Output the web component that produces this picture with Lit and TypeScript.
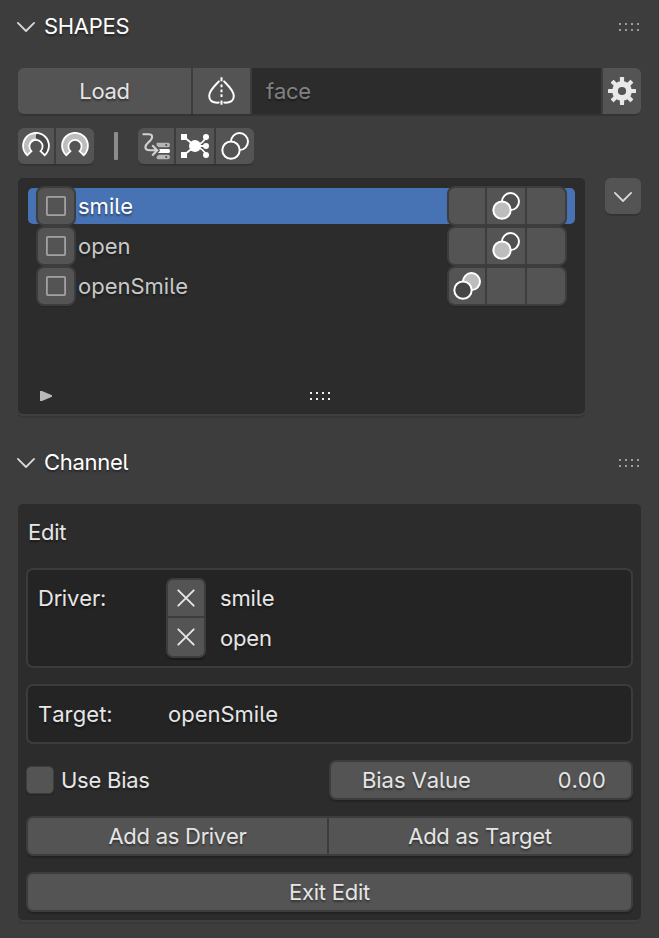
import { LitElement, html, svg, css, nothing } from "lit";
import { customElement, property } from "lit/decorators.js";

const rings = (front: string, back: string) => svg`
  <circle cx="18.5" cy="9.6" r="8.5" fill=${back} stroke="#fff" stroke-width="2"/>
  <circle cx="10" cy="18.1" r="8.7" fill=${front} stroke="#fff" stroke-width="2"/>`;

const horseshoe = "M5.2 23.2 A12.9 12.9 0 1 1 22.8 23.2 L18.6 19.2 A6.6 6.6 0 1 0 9.4 19.2 Z";

const icons: Record<string, unknown> = {
  mirror: svg`<g transform="translate(-.5 0)"><g fill="none" stroke="#fff" stroke-width="2" stroke-linecap="round">
    <path d="M11.4 4.4 C6.8 9 1.7 13.6 1.7 19 C1.7 23.4 4.6 26 11.2 25.6"/>
    <path d="M16.6 4.4 C21.2 9 26.3 13.6 26.3 19 C26.3 23.4 23.4 26 16.8 25.6"/></g>
    <path d="M14 .3V4.3M14 7.5V10.3M14 12.4V15.2M14 17.3V20.1M14 23.5V27.8" stroke="#fff" stroke-width="2"/></g>`,
  gear: svg`<g fill="#e8e8e8">${[0, 45, 90, 135].map(
    (a) => svg`<rect x="11.9" y="0" width="4.2" height="28" rx=".5" transform="rotate(${a} 14 14)"/>`
  )}<circle cx="14" cy="14" r="9.9"/></g><circle cx="14" cy="14" r="4.1" fill="#545454"/>`,
  magnetHalf: svg`<path d=${horseshoe} fill="#484848" stroke="#fff" stroke-width="1.8"/>
    <path d="M14 1.4 A12.4 12.4 0 0 0 5.4 22.9 L9.2 19 A7 7 0 0 1 14 7 Z" fill="#bdbdbd" stroke="#fff" stroke-width="1.2"/>
    <path d="M14.4 2.3V6.5" stroke="#444" stroke-width="1.4"/>`,
  magnet: svg`<path d=${horseshoe} fill="#bdbdbd" stroke="#fff" stroke-width="1.8"/>`,
  driver: svg`<path d="M.6 2.2H6.6C10.4 2.2 11 5 9 7.6C6.6 10.8 3.4 12.4 3.4 15C3.4 17.6 5.4 18.3 8 18.3H14.6M10.2 13.2L15.2 18.3L10.2 23.4" fill="none" stroke="#d2d2d2" stroke-width="2.1"/>
    <path d="M14.6 10.8H26Q28 10.8 28 13T26 15.2H16.6L14.6 13.2Z" fill="#b5b5b5"/>
    <path d="M17.2 16.9H26.6Q28 16.9 28 19T26.6 21.1H15.8L18 19Z" fill="#fff"/>
    <path d="M16.6 22.8H26Q28 22.8 28 25T26 27.2H16.4Q14.4 27.2 14.4 25Z" fill="#b5b5b5"/>
    <rect x="23.4" y="12.2" width="1.7" height="1.7" fill="#444"/><rect x="23.4" y="24.2" width="1.7" height="1.7" fill="#444"/>`,
  nodes: svg`<path d="M3 5L14 14L3 23M25 5Q23 11 14 14Q23 17 25 23M14 14H25" fill="none" stroke="#fff" stroke-width="1.8"/>
    <g fill="#fff"><circle cx="14" cy="14" r="6"/><path d="M0 2H6V8H0ZM0 20H6V26H0Z"/>
    <circle cx="25" cy="5" r="3"/><circle cx="25" cy="14" r="3"/><circle cx="25" cy="23" r="3"/></g>`,
  rings: rings("#545454", "none"),
  ringsFront: rings("#bdbdbd", "#505050"),
  ringsBack: rings("#454545", "#bdbdbd"),
  box: svg`<rect x="4.9" y="4.9" width="18.2" height="18.2" rx="1" fill="none" stroke="#a2a2a2" stroke-width="1.8"/>`,
  chevron: svg`<path d="M5.9 10.9L14 19L22.1 10.9" fill="none" stroke="#d8d8d8" stroke-width="1.8" stroke-linecap="round" stroke-linejoin="round"/>`,
  cross: svg`<path d="M6.3 6.3L21.7 21.7M21.7 6.3L6.3 21.7" stroke="#e6e6e6" stroke-width="1.9" stroke-linecap="round"/>`,
};

const icon = (name: string) =>
  html`<svg class="icon" width="28" height="28" viewBox="0 0 28 28">${icons[name] ?? nothing}</svg>`;

const grip = (cls: string) => html`<svg class=${cls} width="20" height="8" viewBox="0 0 20 8">
  <path d="M0 1H2M6 1H8M12 1H14M18 1H20M0 7H2M6 7H8M12 7H14M18 7H20" stroke="currentColor" stroke-width="2"/></svg>`;

const shared = css`
  * { box-sizing: border-box; }
  .icon { display: block; flex: none; }
  .btn {
    display: flex; align-items: center; justify-content: center;
    background: #545454; color: #e5e5e5; min-width: 0;
  }
`;

@customElement("panel-header")
export class PanelHeader extends LitElement {
  @property() label = "";
  static styles = [shared, css`
    :host { display: flex; align-items: center; height: 36px; padding: 0 20px 0 12px; color: #fff; }
    .title { margin-left: 4px; flex: 1; letter-spacing: -0.3px; }
    .grip { color: #9c9c9c; margin-top: 2px; }
  `];
  render() {
    return html`${icon("chevron")}<span class="title">${this.label}</span>${grip("grip")}`;
  }
}

interface Shape { name: string; active?: boolean; cells: string[]; }

@customElement("shape-list")
export class ShapeList extends LitElement {
  private shapes: Shape[] = [
    { name: "smile", active: true, cells: ["", "ringsFront", ""] },
    { name: "open", cells: ["", "ringsFront", ""] },
    { name: "openSmile", cells: ["ringsBack", "", ""] },
  ];
  static styles = [shared, css`
    :host {
      display: flex; flex-direction: column; width: 567px; height: 236px; padding: 10px 10px 0;
      background: #2c2c2c; border-radius: 5px; box-shadow: 0 2px 0 #3f3f3f, 0 4px 0 #363636;
    }
    .row {
      display: flex; align-items: center; height: 36px; margin-bottom: 4px;
      padding: 0 8px; border-radius: 5px; color: #c9c9c9;
    }
    .active { background: #4772b3; color: #fff; }
    .check, .cells { background: #3d3d3d; padding: 2px; border-radius: 8px; height: 40px; box-shadow: 0 1px 1px rgba(0, 0, 0, 0.15); }
    .check { width: 40px; }
    .check .btn { height: 36px; border-radius: 6px; }
    .name { flex: 1; margin-left: 2px; letter-spacing: 0; }
    .cells { display: grid; grid-template-columns: 36px 38px 38px; gap: 2px; width: 120px; }
    .cells .btn:first-child { border-radius: 6px 0 0 6px; }
    .cells .btn:last-child { border-radius: 0 6px 6px 0; }
    .foot { display: flex; align-items: center; margin-top: auto; height: 36px; padding-left: 12px; }
    .dots { color: #f0f0f0; margin-left: 258px; }
  `];
  render() {
    return html`${this.shapes.map((s) => html`
      <div class="row ${s.active ? "active" : ""}">
        <div class="check"><div class="btn">${icon("box")}</div></div>
        <span class="name">${s.name}</span>
        <div class="cells">${s.cells.map((c) => html`<div class="btn">${c ? icon(c) : nothing}</div>`)}</div>
      </div>`)}
      <div class="foot">
        <svg width="12" height="10" viewBox="0 0 12 10"><path d="M0 0H2L12 4.3V5.7L2 10H0Z" fill="#b8b8b8"/></svg>
        ${grip("dots")}
      </div>`;
  }
}

@customElement("channel-panel")
export class ChannelPanel extends LitElement {
  static styles = [shared, css`
    :host {
      display: flex; flex-direction: column; width: 623px; height: 416px; padding: 10px 8px 8px;
      background: #2c2c2c; border-radius: 5px; box-shadow: 0 2px 0 #3f3f3f, 0 4px 0 #393939; color: #e6e6e6;
    }
    .caption { height: 36px; line-height: 36px; padding-left: 2px; margin-bottom: 18px; }
    .box {
      display: grid; grid-template-columns: 128px auto 1fr; align-items: start; padding: 10px 10px 0;
      background: #242424; border: 2px solid #3c3c3c; border-radius: 7px; margin-bottom: 16px;
    }
    .line { height: 36px; line-height: 36px; letter-spacing: 0; }
    .removers {
      display: grid; grid-template-rows: 36px 38px; gap: 2px; width: 40px; padding: 2px; margin-top: -2px;
      background: #3d3d3d; border-radius: 7px; box-shadow: 0 2px 1px rgba(0, 0, 0, 0.25);
    }
    .removers .btn:first-child { border-radius: 5px 5px 0 0; }
    .removers .btn:last-child { border-radius: 0 0 5px 5px; }
    .names { display: grid; gap: 4px; padding-left: 14px; }
    .driver { height: 100px; }
    .driver .line { letter-spacing: -0.15px; }
    .target { height: 60px; grid-template-columns: 130px 1fr; }
    .frame {
      display: grid; gap: 2px; height: 40px; padding: 2px; background: #3d3d3d;
      border-radius: 7px; box-shadow: 0 2px 1px rgba(0, 0, 0, 0.2);
    }
    .frame .btn:first-child { border-radius: 5px 0 0 5px; }
    .frame .btn:last-child { border-radius: 0 5px 5px 0; }
    .frame .btn:only-child { border-radius: 5px; }
    .bias { display: flex; align-items: center; margin-bottom: 16px; }
    .tick {
      width: 28px; height: 28px; background: #545454; border: 1.5px solid #3d3d3d;
      border-radius: 5px; box-shadow: 0 1px 1px rgba(0, 0, 0, 0.2);
    }
    .use { flex: 1; margin-left: 7px; }
    .frame.value { width: 304px; }
    .value .btn { justify-content: space-between; padding: 0 25px 0 31px; letter-spacing: -0.05px; }
    .num { font-feature-settings: "tnum"; }
    .pair { grid-template-columns: 299px 1fr; margin-bottom: 16px; }
  `];
  render() {
    return html`
      <div class="caption">Edit</div>
      <div class="box driver">
        <span class="line">Driver:</span>
        <div class="removers"><div class="btn">${icon("cross")}</div><div class="btn">${icon("cross")}</div></div>
        <div class="names"><span class="line">smile</span><span class="line">open</span></div>
      </div>
      <div class="box target"><span class="line">Target:</span><span class="line">openSmile</span></div>
      <div class="bias">
        <div class="tick"></div><span class="use">Use Bias</span>
        <div class="frame value"><div class="btn"><span>Bias Value</span><span class="num">0.00</span></div></div>
      </div>
      <div class="frame pair"><div class="btn">Add as Driver</div><div class="btn">Add as Target</div></div>
      <div class="frame"><div class="btn">Exit Edit</div></div>`;
  }
}

@customElement("app-root")
export class AppRoot extends LitElement {
  static styles = [shared, css`
    :host {
      display: block; box-sizing: border-box; width: 659px; height: 938px; overflow: hidden; padding-top: 8px;
      background: #3d3d3d; color: #e5e5e5; font: 400 22px/36px Inter, sans-serif;
      font-feature-settings: "cv05"; font-kerning: none; letter-spacing: -0.25px;
      text-shadow: 0 2px 2px rgba(0, 0, 0, 0.4); white-space: nowrap;
    }
    .content { padding: 0 18px; }
    .source { display: grid; grid-template-columns: 173px 57px 1fr 38px; gap: 2px; height: 46px; margin-top: 24px; }
    .source, .group, .more { box-shadow: 0 3px 1px -1px rgba(0, 0, 0, 0.16); border-radius: 6px; }
    .source .btn:first-child, .group .btn:first-child { border-radius: 6px 0 0 6px; }
    .source .btn:last-child, .group .btn:last-child { border-radius: 0 6px 6px 0; }
    .field { display: flex; align-items: center; padding-left: 14px; background: #2c2c2c; color: #808080; }
    .tools { display: flex; align-items: center; height: 36px; margin: 14px 0; }
    .group { display: flex; gap: 2px; height: 36px; }
    .group .btn { width: 38px; }
    .group .btn:first-child { width: 36px; }
    .bar { width: 4px; height: 28px; margin: 0 20px; background: #8c8c8c; border-radius: 1px; }
    .lists { display: flex; justify-content: space-between; }
    .more { width: 36px; height: 36px; border-radius: 6px; }
    .channel { margin-top: 30px; }
    .panel { padding: 24px 18px 0; }
  `];
  render() {
    return html`
      <panel-header label="SHAPES"></panel-header>
      <div class="content">
        <div class="source">
          <div class="btn">Load</div><div class="btn">${icon("mirror")}</div>
          <div class="field">face</div><div class="btn">${icon("gear")}</div>
        </div>
        <div class="tools">
          <div class="group"><div class="btn">${icon("magnetHalf")}</div><div class="btn">${icon("magnet")}</div></div>
          <div class="bar"></div>
          <div class="group">${["driver", "nodes", "rings"].map((n) => html`<div class="btn">${icon(n)}</div>`)}</div>
        </div>
        <div class="lists"><shape-list></shape-list><div class="btn more">${icon("chevron")}</div></div>
      </div>
      <panel-header class="channel" label="Channel"></panel-header>
      <div class="panel"><channel-panel></channel-panel></div>`;
  }
}
